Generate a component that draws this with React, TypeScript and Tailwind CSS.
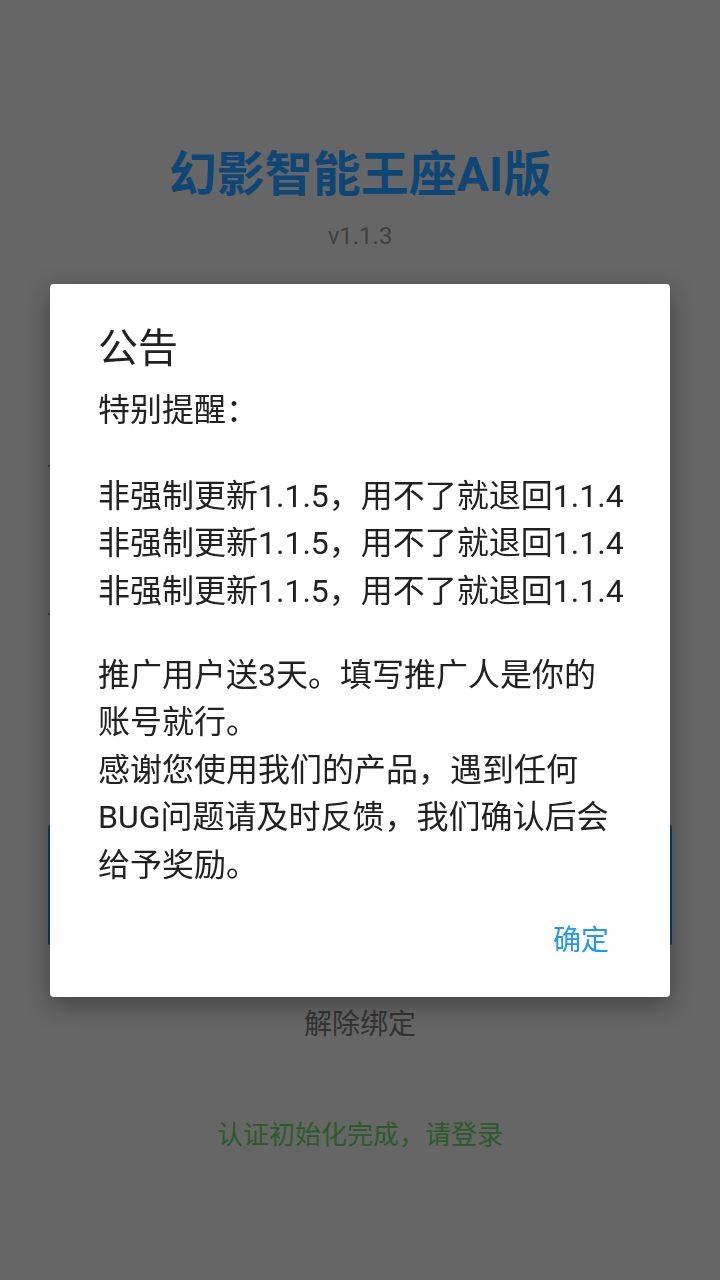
import React from 'react'

const font = { fontFamily: 'Roboto, "Noto Sans CJK SC", sans-serif' }

const App: React.FC = () => {
  return (
    <div className="relative min-h-[1280px] w-full bg-[#666666] flex flex-col items-center" style={font}>
      {/* page behind the dim */}
      <h1 className="mt-[147px] text-[48px] leading-[56px] font-bold text-[#0e4675]">幻影智能王座AI版</h1>
      <p className="mt-[17px] text-[24px] leading-[32px] text-[#404040]">v1.1.3</p>

      <div className="mt-[135px] self-start ml-[48px] w-[600px] h-[80px] border-b-2 border-[#3a3a3a]" />
      <div className="mt-[68px] self-start ml-[48px] w-[600px] h-[80px] border-b-2 border-[#3a3a3a]" />

      <div className="mt-[210px] w-[624px] h-[120px] bg-[#0c3d66] rounded-[2px]" />

      <p className="mt-[60px] text-[28px] leading-[40px] text-[#333333]">解除绑定</p>
      <p className="mt-[70px] text-[26px] leading-[40px] text-[#2c5a2c]">认证初始化完成，请登录</p>

      {/* announcement dialog */}
      <div className="fixed inset-0 flex items-center justify-center">
        <div className="w-[620px] bg-white rounded-[4px] shadow-[0_8px_24px_rgba(0,0,0,0.35)] pl-[48px] pt-[41px] pb-[36px] text-[#212121]">
          <h2 className="text-[40px] leading-[48px]">公告</h2>
          <div className="text-[32px] leading-[47.5px] whitespace-nowrap">
            <p className="mt-[14.25px]">特别提醒：</p>
            <p className="mt-[38.5px]">
              非强制更新1.1.5，用不了就退回1.1.4<br />
              非强制更新1.1.5，用不了就退回1.1.4<br />
              非强制更新1.1.5，用不了就退回1.1.4
            </p>
            <p className="mt-[36.5px]">
              推广用户送3天。填写推广人是你的<br />
              账号就行。<br />
              感谢您使用我们的产品，遇到任何<br />
              BUG问题请及时反馈，我们确认后会<br />
              给予奖励。
            </p>
          </div>
          <div className="mt-[31.25px] flex justify-end pr-[61px]">
            <button className="text-[28px] leading-[40px] text-[#2196f3]">确定</button>
          </div>
        </div>
      </div>
    </div>
  )
}

export default App
